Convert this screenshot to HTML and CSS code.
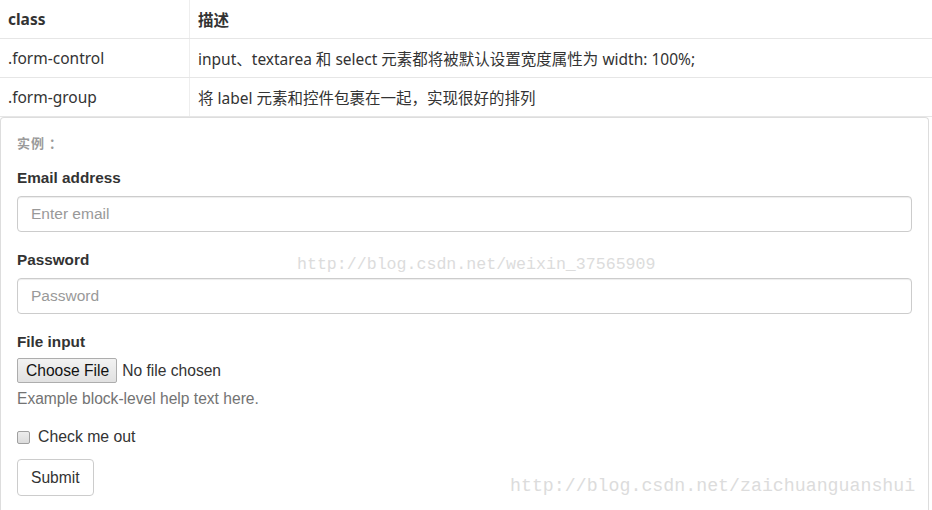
FILE: index.html
```html
<!DOCTYPE html>
<html lang="zh-CN">
<head>
    <meta charset="UTF-8">
    <meta name="viewport" content="width=device-width, initial-scale=1.0">
    <title>Bootstrap 表单控件</title>
    <link rel="stylesheet" href="styles.css">
</head>
<body>
    <table class="ref-table">
        <thead>
            <tr>
                <th>class</th>
                <th>描述</th>
            </tr>
        </thead>
        <tbody>
            <tr>
                <td>.form-control</td>
                <td>input、textarea 和 select 元素都将被默认设置宽度属性为 width: 100%;</td>
            </tr>
            <tr>
                <td>.form-group</td>
                <td>将 label 元素和控件包裹在一起，实现很好的排列</td>
            </tr>
        </tbody>
    </table>

    <div class="example">
        <div class="example-title">实例 ：</div>
        <form onsubmit="return false;">
            <div class="form-group">
                <label for="email">Email address</label>
                <input type="email" id="email" class="form-control" placeholder="Enter email">
            </div>
            <div class="form-group">
                <label for="password">Password</label>
                <input type="password" id="password" class="form-control" placeholder="Password">
            </div>
            <div class="form-group">
                <label for="file">File input</label>
                <input type="file" id="file" class="file-input">
                <p class="help-block">Example block-level help text here.</p>
            </div>
            <div class="checkbox">
                <label><input type="checkbox"> Check me out</label>
            </div>
            <button type="submit" class="btn">Submit</button>
        </form>
    </div>

    <div class="watermark wm-one">http://blog.csdn.net/weixin_37565909</div>
    <div class="watermark wm-two">http://blog.csdn.net/zaichuanguanshui</div>
</body>
</html>
```

FILE: styles.css
```css
body {
    margin: 0;
    font-family: 'Liberation Sans', Arial, 'Noto Sans CJK SC', sans-serif;
    color: #333;
    background-color: #fff;
    position: relative;
}

.ref-table {
    width: 100%;
    border-collapse: collapse;
    font-family: 'Noto Sans', 'Noto Sans CJK SC', sans-serif;
    font-size: 15.5px;
    color: #333;
}

.ref-table th,
.ref-table td {
    height: 38px;
    padding: 0 8px;
    text-align: left;
    border-bottom: 1px solid #e6e6e6;
}

.ref-table th {
    font-weight: bold;
}

.ref-table th:first-child,
.ref-table td:first-child {
    width: 173px;
    border-right: 1px solid #eee;
}

.example {
    width: 929px;
    box-sizing: border-box;
    border: 1px solid #ddd;
    border-bottom: none;
    border-radius: 4px 4px 0 0;
    padding: 15px 16px 15px 15px;
}

.example-title {
    padding-left: 1px;
    font-family: 'Noto Sans CJK SC', sans-serif;
    font-size: 13px;
    font-weight: bold;
    line-height: 20px;
    letter-spacing: 1px;
    color: #9a9a9a;
}

form {
    margin-top: 15px;
    padding-left: 1px;
}

.form-group {
    margin-bottom: 18px;
}

.form-group label {
    display: block;
    font-size: 15.3px;
    font-weight: bold;
    line-height: 20px;
    margin-bottom: 8px;
}

.form-control {
    display: block;
    width: 100%;
    height: 36px;
    box-sizing: border-box;
    padding: 0 13px;
    border: 1px solid #ccc;
    border-radius: 4px;
    box-shadow: inset 0 1px 1px rgba(0, 0, 0, 0.075);
    font-family: inherit;
    font-size: 15.5px;
    color: #555;
}

.form-control::placeholder {
    color: #999;
}

.form-group label + .file-input {
    margin-top: -2px;
}

.file-input {
    display: block;
    font-family: inherit;
    font-size: 15.6px;
    color: #333;
    height: 25px;
}

.file-input::file-selector-button {
    height: 25px;
    margin-right: 5px;
    padding: 0 7px 0 8px;
    border: 1px solid #adadad;
    border-radius: 2px;
    background: linear-gradient(#f2f2f2, #e1e1e1);
    font-family: inherit;
    font-size: 15.6px;
    color: #111;
}

.help-block {
    margin: 6px 0 0;
    font-size: 15.6px;
    line-height: 20px;
    color: #737373;
}

.checkbox {
    margin-bottom: 12px;
    font-size: 15.8px;
    line-height: 20px;
}

.checkbox label {
    display: flex;
    align-items: center;
    gap: 8px;
}

.checkbox input {
    appearance: none;
    width: 13px;
    height: 13px;
    margin: 0;
    border: 1px solid #a0a0a0;
    border-radius: 2px;
    background: linear-gradient(#ececec, #dcdcdc);
}

.btn {
    height: 37px;
    padding: 0 13px;
    border: 1px solid #ccc;
    border-radius: 4px;
    background-color: #fff;
    font-family: inherit;
    font-size: 15.6px;
    color: #333;
}

.watermark {
    position: absolute;
    font-family: 'Liberation Mono', monospace;
    color: #dcdcdc;
    white-space: nowrap;
    pointer-events: none;
}

.wm-one {
    left: 297px;
    top: 255px;
    font-size: 16.6px;
}

.wm-two {
    left: 510px;
    top: 476px;
    font-size: 18.25px;
}
```
